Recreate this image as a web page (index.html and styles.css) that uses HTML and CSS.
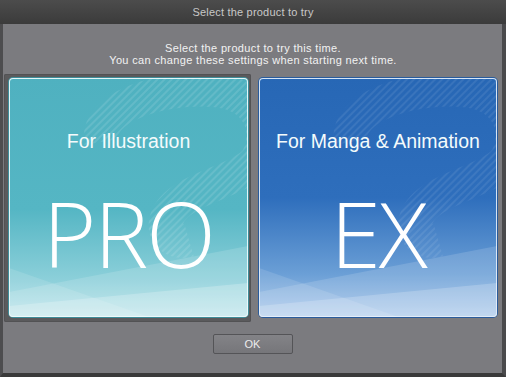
FILE: index.html
```html
<!DOCTYPE html>
<html lang="en">
<head>
    <meta charset="UTF-8">
    <title>Select the product to try</title>
    <link rel="stylesheet" href="styles.css">
</head>
<body>
    <div class="ventana">
        <div class="titulo">Select the product to try</div>
        <div class="contenido">
            <p class="aviso">Select the product to try this time.<br>You can change these settings when starting next time.</p>
            <div class="productos">
                <div class="marco activo">
                    <div class="tarjeta pro">
                        <svg class="fondo" viewBox="0 0 239 239" preserveAspectRatio="none">
                            <defs>
                                <pattern id="rayas1" width="5" height="5" patternUnits="userSpaceOnUse" patternTransform="rotate(45)">
                                    <rect width="2" height="5" fill="#ffffff" fill-opacity="0.11"></rect>
                                </pattern>
                            </defs>
                            <path d="M92 64 C86 30 150 8 205 12 C250 16 262 50 250 78 C238 104 170 108 158 140 C152 156 166 166 180 162" fill="none" stroke="url(#rayas1)" stroke-width="34"></path>
                            <polygon points="0,239 0,214 239,168 239,239" fill="#ffffff" fill-opacity="0.14"></polygon>
                            <polygon points="0,190 140,239 0,239" fill="#ffffff" fill-opacity="0.12"></polygon>
                            <polygon points="0,239 0,228 239,205 239,239" fill="#ffffff" fill-opacity="0.22"></polygon>
                        </svg>
                        <div class="subtitulo">For Illustration</div>
                        <div class="nombre">PRO</div>
                    </div>
                </div>
                <div class="marco">
                    <div class="tarjeta ex">
                        <svg class="fondo" viewBox="0 0 239 239" preserveAspectRatio="none">
                            <defs>
                                <pattern id="rayas2" width="5" height="5" patternUnits="userSpaceOnUse" patternTransform="rotate(45)">
                                    <rect width="2" height="5" fill="#ffffff" fill-opacity="0.08"></rect>
                                </pattern>
                            </defs>
                            <path d="M92 64 C86 30 150 8 205 12 C250 16 262 50 250 78 C238 104 170 108 158 140 C152 156 166 166 180 162" fill="none" stroke="url(#rayas2)" stroke-width="34"></path>
                            <polygon points="0,239 0,214 239,168 239,239" fill="#ffffff" fill-opacity="0.14"></polygon>
                            <polygon points="0,190 140,239 0,239" fill="#ffffff" fill-opacity="0.12"></polygon>
                            <polygon points="0,239 0,228 239,205 239,239" fill="#ffffff" fill-opacity="0.2"></polygon>
                        </svg>
                        <div class="subtitulo">For Manga &amp; Animation</div>
                        <div class="nombre">EX</div>
                    </div>
                </div>
            </div>
            <div class="botones">
                <button class="boton">OK</button>
            </div>
        </div>
    </div>
</body>
</html>
```

FILE: styles.css
```css
* {
    margin: 0;
    padding: 0;
    box-sizing: border-box;
}
body {
    background-color: #3a3a3a;
    font-family: 'Liberation Sans', Arial, sans-serif;
}
.ventana {
    width: 506px;
    height: 377px;
    display: flex;
    flex-direction: column;
    background-color: #7b7b7f;
    border-left: 3px solid #4d4d4f;
    border-right: 4px solid #4a4a4c;
    border-bottom: 4px solid #3a3a3a;
}
.titulo {
    height: 24px;
    margin: 0 -4px 0 -3px;
    background: linear-gradient(#4c4c4c, #3b3b3b);
    color: #c8c8c8;
    font-size: 11px;
    line-height: 24px;
    letter-spacing: 0.2px;
    text-align: center;
}
.contenido {
    flex: 1;
    display: flex;
    flex-direction: column;
    padding-left: 1px;
}
.aviso {
    margin-top: 18px;
    color: #f2f2f2;
    font-size: 11px;
    line-height: 12px;
    letter-spacing: 0.35px;
    text-align: center;
}
.productos {
    display: flex;
    gap: 3px;
    margin-top: 8px;
}
.marco {
    padding: 4px 3px 5px 5px;
    border-radius: 2px;
}
.marco.activo {
    background-color: #5a5a5c;
    box-shadow: inset 0 0 0 1px #525254;
}
.tarjeta {
    position: relative;
    width: 239px;
    height: 239px;
    border-radius: 4px;
    overflow: hidden;
    display: flex;
    flex-direction: column;
    align-items: center;
    color: white;
}
.tarjeta.ex {
    width: 238px;
}
.pro {
    background: linear-gradient(#4fb1c0 0%, #55b6c4 55%, #8dd0da 85%, #b9e3e9 100%);
    box-shadow: inset 0 0 0 1px #e4f6f8, 0 0 0 1px #3f8d99;
}
.ex {
    background: linear-gradient(#2767b5 0%, #2e6ebc 50%, #6b9fd6 82%, #a6c6ea 100%);
    box-shadow: inset 0 0 0 1px #d5e4f5, 0 0 0 1px #2a5c9c;
}
.fondo {
    position: absolute;
    left: 0;
    top: 0;
    width: 100%;
    height: 100%;
}
.subtitulo {
    position: relative;
    margin-top: 53px;
    font-size: 19.5px;
    line-height: 20px;
    color: #f4fbfc;
}
.nombre {
    position: relative;
    margin-top: 37px;
    font-family: 'Open Sans', sans-serif;
    font-weight: 300;
    font-size: 91px;
    line-height: 91px;
    letter-spacing: -2px;
}
.botones {
    display: flex;
    justify-content: center;
    margin-top: 12px;
    padding-right: 1px;
}
.boton {
    width: 80px;
    height: 20px;
    border: 1px solid #545457;
    border-radius: 2px;
    background: linear-gradient(#838387, #76767a);
    color: #ececec;
    font-family: 'Liberation Sans', Arial, sans-serif;
    font-size: 11px;
}
```
